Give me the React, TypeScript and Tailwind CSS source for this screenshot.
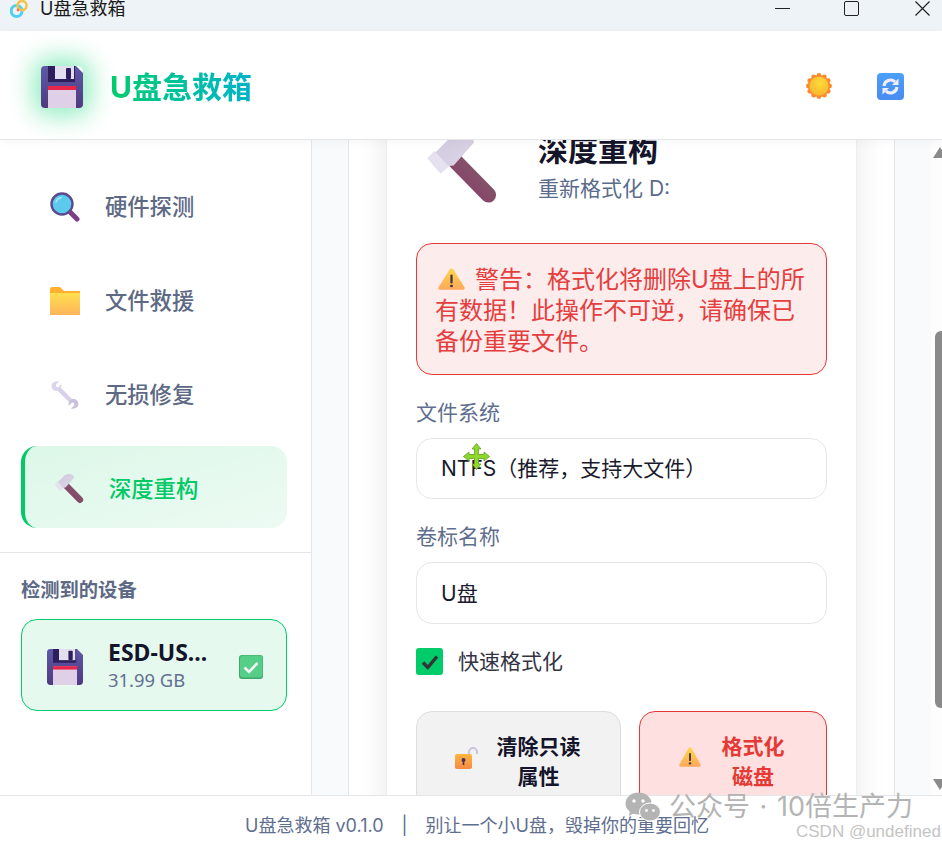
import React from "react";

function Floppy({ className }: { className: string }) {
  return (
    <svg viewBox="0 0 42 42" className={className}>
      <defs>
        <linearGradient id="fb" x1="0" y1="0" x2="0" y2="1">
          <stop offset="0" stopColor="#5f58a8" />
          <stop offset="1" stopColor="#4f3a80" />
        </linearGradient>
      </defs>
      <path d="M4 0H35L42 7V38a4 4 0 0 1-4 4H4a4 4 0 0 1-4-4V4a4 4 0 0 1 4-4z" fill="url(#fb)" />
      <rect x="7" y="0" width="27" height="16" fill="#2c1f5c" />
      <rect x="14" y="0" width="19" height="13" fill="#e4dff0" />
      <rect x="25" y="2" width="5" height="11" rx="1" fill="#2c1f5c" />
      <rect x="7" y="20" width="28" height="22" fill="#dfd0e8" />
      <rect x="7" y="20" width="28" height="4" fill="#e8264a" />
    </svg>
  );
}

function Magnifier({ className }: { className: string }) {
  return (
    <svg viewBox="0 0 30 30" className={className}>
      <line x1="20" y1="20" x2="27" y2="27" stroke="#7a3f87" strokeWidth="5" strokeLinecap="round" />
      <circle cx="12" cy="12" r="10.5" fill="#5ccaec" stroke="#5b4a8e" strokeWidth="2.4" />
      <path d="M6 10a7 7 0 0 1 5-4.5" fill="none" stroke="#a5e4f6" strokeWidth="1.6" strokeLinecap="round" />
    </svg>
  );
}

function Folder({ className }: { className: string }) {
  return (
    <svg viewBox="0 0 30 28" className={className}>
      <defs>
        <linearGradient id="fo" x1="0" y1="0" x2="0" y2="1">
          <stop offset="0" stopColor="#ffe04d" />
          <stop offset="1" stopColor="#ffb45c" />
        </linearGradient>
      </defs>
      <path d="M0 2a2 2 0 0 1 2-2h8l4 4h16v6H0z" fill="#ffb02e" />
      <rect x="0" y="6" width="30" height="22" fill="url(#fo)" />
    </svg>
  );
}

function Wrench({ className }: { className: string }) {
  return (
    <svg viewBox="0 0 28 28" className={className}>
      <line x1="7" y1="7" x2="21" y2="21" stroke="#d9d1ea" strokeWidth="4.4" />
      <path d="M8 0.5 L4.8 3.7 L5 6 L7 6.4 L10.2 3.2 C11 6.5 9 10 5.5 10 C1.5 10 -0.5 6 1 3 C2.5 0.5 5.5 -0.3 8 0.5z" fill="#dcd4ec" />
      <path d="M20 27.5 L23.2 24.3 L23 22 L21 21.6 L17.8 24.8 C17 21.5 19 18 22.5 18 C26.5 18 28.5 22 27 25 C25.5 27.5 22.5 28.3 20 27.5z" fill="#c9c0de" />
    </svg>
  );
}

function Hammer({ className }: { className: string }) {
  return (
    <svg viewBox="0 0 30 30" className={className}>
      <defs>
        <linearGradient id="hh" x1="0" y1="1" x2="1" y2="0">
          <stop offset="0" stopColor="#8d3a68" />
          <stop offset="1" stopColor="#7c5f6a" />
        </linearGradient>
        <linearGradient id="hd" x1="0" y1="0" x2="1" y2="1">
          <stop offset="0" stopColor="#cfc8de" />
          <stop offset="1" stopColor="#dcd6e6" />
        </linearGradient>
      </defs>
      <line x1="12" y1="11.5" x2="26" y2="25.8" stroke="url(#hh)" strokeWidth="6.4" strokeLinecap="round" />
      <path d="M3.5 8.5 L11 1 L15.5 -0.5 L19.5 1.5 L20 4 L11.5 13.5 L8 14z" fill="url(#hd)" />
      <path d="M0.5 10.5 L3.5 7.5 L9.5 14 L6 17z" fill="#e6e1ee" />
    </svg>
  );
}

function Sun({ className }: { className: string }) {
  const bumps = [0, 30, 60, 90, 120, 150, 180, 210, 240, 270, 300, 330];
  return (
    <svg viewBox="0 0 26 26" className={className}>
      <defs>
        <radialGradient id="su" cx="0.55" cy="0.35" r="0.75">
          <stop offset="0" stopColor="#ffdc3a" />
          <stop offset="1" stopColor="#f5b02a" />
        </radialGradient>
      </defs>
      {bumps.map((a) => (
        <circle
          key={a}
          cx={13 + 10.6 * Math.cos((a * Math.PI) / 180)}
          cy={13 + 10.6 * Math.sin((a * Math.PI) / 180)}
          r="2.4"
          fill="#fb8a2e"
        />
      ))}
      <circle cx="13" cy="13" r="11" fill="#fb8a2e" />
      <circle cx="13" cy="13" r="9.6" fill="url(#su)" />
    </svg>
  );
}

function Refresh({ className }: { className: string }) {
  return (
    <svg viewBox="0 0 27 27" className={className}>
      <defs>
        <linearGradient id="re" x1="0" y1="0" x2="0" y2="1">
          <stop offset="0" stopColor="#4c9ff8" />
          <stop offset="1" stopColor="#4a8bf2" />
        </linearGradient>
      </defs>
      <rect width="27" height="27" rx="4" fill="url(#re)" />
      <path d="M7 13a6.6 6.6 0 0 1 11-4.2" fill="none" stroke="#f1eefb" strokeWidth="3" />
      <path d="M21.5 5.5v6.5h-6.5z" fill="#f1eefb" />
      <path d="M20 14a6.6 6.6 0 0 1-11 4.2" fill="none" stroke="#f1eefb" strokeWidth="3" />
      <path d="M5.5 21.5v-6.5h6.5z" fill="#f1eefb" />
    </svg>
  );
}

function CheckMark({ className }: { className: string }) {
  return (
    <svg viewBox="0 0 24 24" className={className}>
      <rect width="24" height="24" rx="3" fill="#3fa76c" />
      <rect x="1" y="0.5" width="22.5" height="22" rx="3" fill="#55cf88" />
      <path d="M5.5 12.5l4.5 4.5 8.5-9" fill="none" stroke="#f4f4f6" strokeWidth="2.6" />
    </svg>
  );
}

function Unlock({ className }: { className: string }) {
  return (
    <svg viewBox="0 0 24 22" className={className}>
      <defs>
        <linearGradient id="ul" x1="0" y1="0" x2="0" y2="1">
          <stop offset="0" stopColor="#ffb53f" />
          <stop offset="1" stopColor="#f58a45" />
        </linearGradient>
      </defs>
      <path d="M14 8V5a4 4 0 0 1 8 0v2" fill="none" stroke="#cfc6de" strokeWidth="2.2" />
      <rect x="0" y="7" width="17" height="15" rx="2" fill="url(#ul)" />
      <circle cx="8.5" cy="13" r="2" fill="#4a2f5e" />
      <rect x="7.7" y="13" width="1.6" height="5" fill="#4a2f5e" />
    </svg>
  );
}

function Warning({ className }: { className: string }) {
  return (
    <svg viewBox="0 0 24 22" preserveAspectRatio="none" className={className}>
      <defs>
        <linearGradient id="wa" x1="0" y1="0" x2="0" y2="1">
          <stop offset="0" stopColor="#ffd64a" />
          <stop offset="1" stopColor="#ffa85c" />
        </linearGradient>
      </defs>
      <path d="M10.5 1.2a1.8 1.8 0 0 1 3 0l10 18a1.8 1.8 0 0 1-1.5 2.6H2a1.8 1.8 0 0 1-1.5-2.6z" fill="url(#wa)" />
      <rect x="11" y="6.5" width="2" height="9" rx="1" fill="#3d3440" />
      <circle cx="12" cy="18" r="1.3" fill="#3d3440" />
    </svg>
  );
}

function AppIcon({ className }: { className: string }) {
  return (
    <svg viewBox="0 0 18 18" className={className}>
      <circle cx="6.6" cy="11" r="5.4" fill="none" stroke="#4fd0ee" strokeWidth="3" />
      <circle cx="12" cy="5.6" r="4.6" fill="none" stroke="#f7c24a" strokeWidth="2.6" />
      <circle cx="8" cy="10" r="1.4" fill="#ef6f7c" />
    </svg>
  );
}

function MoveCursor({ className }: { className: string }) {
  return (
    <svg viewBox="0 0 27 27" className={className}>
      <path
        d="M13.5 0.5L18 6h-2.5v5.5H21V9l5.5 4.5L21 18v-2.5h-5.5V21H18l-4.5 5.5L9 21h2.5v-5.5H6V18L0.5 13.5 6 9v2.5h5.5V6H9z"
        fill="#8fd72d"
        stroke="#5f9f1e"
        strokeWidth="0.8"
      />
    </svg>
  );
}

function WeChat({ className }: { className: string }) {
  return (
    <svg viewBox="0 0 36 30" className={className}>
      <ellipse cx="13.5" cy="11.5" rx="13" ry="11" fill="#b4b4b4" />
      <path d="M5 18l-1 6 7-4z" fill="#b4b4b4" />
      <circle cx="9" cy="9" r="1.7" fill="#fff" />
      <circle cx="18" cy="9" r="1.7" fill="#fff" />
      <ellipse cx="25" cy="20" rx="10.5" ry="9" fill="#b4b4b4" stroke="#fff" strokeWidth="1" />
      <circle cx="21.5" cy="18.5" r="1.4" fill="#fff" />
      <circle cx="28.5" cy="18.5" r="1.4" fill="#fff" />
    </svg>
  );
}

function NavItem({ icon, label }: { icon: React.ReactNode; label: string }) {
  return (
    <div className="flex h-[82px] items-center rounded-2xl pl-[29px] pt-[3px]">
      <div className="flex w-[30px] justify-center">{icon}</div>
      <span className="ml-[25px] text-[22.3px] font-medium text-[#5d6985]">{label}</span>
    </div>
  );
}

export default function App() {
  return (
    <div className="relative flex h-[846px] w-[942px] flex-col overflow-hidden bg-white font-[Inter,'Noto_Sans_CJK_SC',sans-serif] text-[#1a1a2e]">
      {/* window title bar */}
      <div className="flex h-[31px] shrink-0 items-start bg-[#eef3f8] pl-[10px]">
        <AppIcon className="h-[18px] w-[18px]" />
        <span className="ml-3 text-[18px] leading-[17px] text-[#1a1a1a]">U盘急救箱</span>
        <div className="ml-auto flex items-start">
          <div className="mt-2 h-px w-[15px] bg-[#222]" />
          <div className="ml-[54px] mt-px h-[15px] w-[15px] rounded-[2px] border-[1.5px] border-[#222]" />
          <svg viewBox="0 0 15 15" className="ml-[56px] mr-3 mt-px h-[15px] w-[15px]">
            <path d="M0.5 0.5l14 14M14.5 0.5l-14 14" stroke="#222" strokeWidth="1.2" />
          </svg>
        </div>
      </div>

      {/* app header */}
      <header className="relative z-10 flex h-[109px] shrink-0 items-center border-b border-[#e4e6ea] bg-white pl-[41px] pr-[38px] pt-1 shadow-[0_2px_10px_rgba(0,0,0,0.04)]">
        <div className="rounded-md shadow-[0_0_24px_8px_rgba(0,214,110,0.42)]">
          <Floppy className="block h-[42px] w-[42px]" />
        </div>
        <h1 className="ml-[27px] bg-gradient-to-r from-[#00cc6a] to-[#00b3c9] bg-clip-text text-[30px] font-bold leading-9 text-transparent">
          U盘急救箱
        </h1>
        <div className="-mt-[2px] ml-auto flex items-center gap-[45px]">
          <Sun className="h-[26px] w-[26px]" />
          <Refresh className="h-[27px] w-[27px]" />
        </div>
      </header>

      <div className="flex min-h-0 flex-1">
        {/* sidebar */}
        <aside className="flex w-[312px] shrink-0 flex-col border-r border-[#e4e6ea] bg-white">
          <nav className="flex flex-col gap-3 border-b border-[#e4e6ea] pb-6 pl-[21px] pr-[24px] pt-6">
            <NavItem icon={<Magnifier className="h-[30px] w-[30px]" />} label="硬件探测" />
            <NavItem icon={<Folder className="h-[28px] w-[30px]" />} label="文件救援" />
            <NavItem icon={<Wrench className="h-[28px] w-[28px]" />} label="无损修复" />
            <div className="flex h-[82px] items-center rounded-2xl border-l-4 border-[#00c965] bg-gradient-to-br from-[#dcf7e8] to-[#edfbf3] pl-[29px] pt-[3px]">
              <Hammer className="h-[30px] w-[30px]" />
              <span className="ml-[25px] text-[22.3px] font-medium text-[#00c965]">深度重构</span>
            </div>
          </nav>
          <div className="pl-[21px] pr-[24px] pt-6">
            <h2 className="text-[19.3px] font-bold leading-[26px] text-[#5d6985]">检测到的设备</h2>
            <div className="mt-4 flex h-[92px] items-center rounded-2xl border border-[#00cc6a] bg-[#e6f9ef] pl-[25px] pr-[23px] pt-1">
              <Floppy className="h-[36px] w-[36px]" />
              <div className="-mt-[2px] ml-[25px] flex flex-col">
                <span className="font-['Noto_Sans',sans-serif] text-[23px] font-bold leading-[27px] text-[#14142b]">ESD-US...</span>
                <span className="font-['Noto_Sans',sans-serif] text-[18.4px] leading-[27px] text-[#64708f]">31.99 GB</span>
              </div>
              <CheckMark className="ml-auto h-[24px] w-[24px]" />
            </div>
          </div>
        </aside>

        {/* main */}
        <main className="relative min-w-0 flex-1 overflow-hidden bg-[#f8fafc] pl-9">
          <div className="flex h-full w-[547px] flex-col border-x border-[#e4e6ea] bg-white px-[37px]">
            <section className="-mt-[37px] shrink-0 rounded-2xl border-x border-[#eceef1] bg-white px-[29px] pt-[30px] shadow-[0_4px_30px_rgba(0,0,0,0.09)]">
              <div className="flex h-[72px] items-start">
                <Hammer className="ml-[10px] h-[72px] w-[72px]" />
                <div className="-mt-[2px] ml-[40px]">
                  <h2 className="text-[30px] font-bold leading-[38px] text-[#14142b]">深度重构</h2>
                  <p className="mt-[5px] text-[21px] leading-[30px] text-[#5a6b8c]">重新格式化 D:</p>
                </div>
              </div>

              <div className="mt-[38px] rounded-2xl border border-[#e53935] bg-[#fcecec] px-[18px] pb-[17px] pt-5 text-[24px] leading-[31px] text-[#e53e3e]">
                <Warning className="ml-[3px] mr-[10px] inline-block h-[22px] w-[27px] align-[-2px]" />
                警告：格式化将删除U盘上的所有数据！此操作不可逆，请确保已备份重要文件。
              </div>

              <label className="mt-[23px] block text-[21px] leading-[30px] text-[#5f6f8f]">文件系统</label>
              <div className="mt-[10px] flex h-[61px] items-center rounded-2xl border border-[#e5e7eb] bg-white pl-6 text-[21px] text-[#1a1a2e]">
                NTFS（推荐，支持大文件）
              </div>

              <label className="mt-[23px] block text-[21px] leading-[30px] text-[#5f6f8f]">卷标名称</label>
              <div className="mt-[10px] flex h-[62px] items-center rounded-2xl border border-[#e5e7eb] bg-white pl-6 pt-[2px] text-[21px] text-[#1a1a2e]">
                U盘
              </div>

              <div className="mt-[24px] flex h-[27px] items-center">
                <div className="flex h-[27px] w-[27px] items-center justify-center rounded-[3px] bg-[#00cc6a]">
                  <svg viewBox="0 0 20 20" className="h-5 w-5">
                    <path d="M3 10.5l4.8 5L17 4.5" fill="none" stroke="#333338" strokeWidth="3.4" />
                  </svg>
                </div>
                <span className="ml-[15px] pt-[1px] text-[21px] text-[#333344]">快速格式化</span>
              </div>

              <div className="mt-[36px] flex gap-[18px]">
                <button className="flex h-[120px] w-[205px] items-start justify-center rounded-2xl border border-[#dedede] bg-[#f2f2f3] pr-[2px] pt-5">
                  <Unlock className="mt-[15px] h-[22px] w-[24px]" />
                  <span className="ml-[18px] w-[84px] text-center text-[21px] font-bold leading-[30px] text-[#14142b]">清除只读属性</span>
                </button>
                <button className="flex h-[120px] flex-1 items-start justify-center rounded-2xl border border-[#e53935] bg-[#ffe0e0] pr-[3px] pt-5">
                  <Warning className="mt-[15px] h-[20px] w-[22px]" />
                  <span className="ml-[21px] w-[63px] text-center text-[21px] font-bold leading-[30px] text-[#e53935]">格式化磁盘</span>
                </button>
              </div>
            </section>
          </div>

          {/* scrollbar */}
          <div className="absolute inset-y-0 right-0 w-[11px] overflow-hidden bg-[#fdfdfe]">
            <div className="absolute right-[-5px] top-[7px] h-0 w-0 border-x-[7px] border-b-[11px] border-x-transparent border-b-[#8a8a8a]" />
            <div className="absolute right-0 top-[191px] h-[377px] w-[7px] rounded-l-md bg-[#8a8a8a]" />
            <div className="absolute bottom-[5px] right-[-5px] h-0 w-0 border-x-[7px] border-t-[11px] border-x-transparent border-t-[#8a8a8a]" />
          </div>
        </main>
      </div>

      {/* footer */}
      <footer className="relative z-10 flex h-[51px] shrink-0 items-end justify-center border-t border-[#e4e6ea] bg-white pb-[8px] pl-3 text-[18px] leading-6 text-[#5f6f8f]">
        <span>U盘急救箱 v0.1.0</span>
        <span className="mx-[18px]">|</span>
        <span>别让一个小U盘，毁掉你的重要回忆</span>
      </footer>

      {/* overlays: cursor and watermark */}
      <MoveCursor className="absolute left-[463px] top-[443px] z-20 h-[27px] w-[27px]" />
      <div className="absolute left-[625px] top-[791px] z-20 flex items-center">
        <WeChat className="h-[30px] w-[36px]" />
        <span className="ml-2 text-[27px] leading-8 text-[#b4b4b4] [word-spacing:2px]">公众号 · 10倍生产力</span>
      </div>
      <span className="absolute left-[796px] top-[822px] z-20 font-['Liberation_Sans',sans-serif] text-[17px] leading-5 text-[#c4c4c4]">CSDN @undefined</span>
    </div>
  );
}
